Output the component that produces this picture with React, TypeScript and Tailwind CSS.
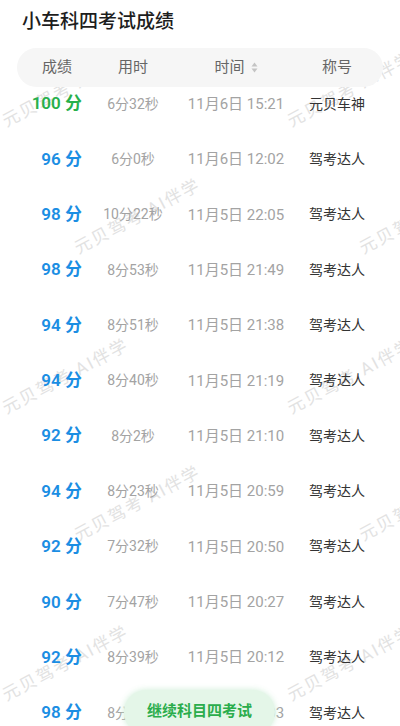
import React from "react";

const rows = [
  { s: "100 分", d: "6分32秒", t: "11月6日 15:21", n: "元贝车神", g: true },
  { s: "96 分", d: "6分0秒", t: "11月6日 12:02", n: "驾考达人" },
  { s: "98 分", d: "10分22秒", t: "11月5日 22:05", n: "驾考达人" },
  { s: "98 分", d: "8分53秒", t: "11月5日 21:49", n: "驾考达人" },
  { s: "94 分", d: "8分51秒", t: "11月5日 21:38", n: "驾考达人" },
  { s: "94 分", d: "8分40秒", t: "11月5日 21:19", n: "驾考达人" },
  { s: "92 分", d: "8分2秒", t: "11月5日 21:10", n: "驾考达人" },
  { s: "94 分", d: "8分23秒", t: "11月5日 20:59", n: "驾考达人" },
  { s: "92 分", d: "7分32秒", t: "11月5日 20:50", n: "驾考达人" },
  { s: "90 分", d: "7分47秒", t: "11月5日 20:27", n: "驾考达人" },
  { s: "92 分", d: "8分39秒", t: "11月5日 20:12", n: "驾考达人" },
  { s: "98 分", d: "8分15秒", t: "11月5日 20:03", n: "驾考达人" },
];

const WM = "元贝驾考 AI伴学";
const wmCls =
  "whitespace-nowrap text-[17px] leading-[17px] h-[17px] tracking-[2px] text-[#e2e2e2] origin-bottom-left -rotate-[28deg]";

function WatermarkTile() {
  return (
    <div className="w-[285px] h-[287px] flex flex-col items-start">
      <span className={wmCls}>{WM}</span>
      <span className={`${wmCls} ml-[72px] mt-[110px]`}>{WM}</span>
    </div>
  );
}

export default function App() {
  return (
    <div
      className="relative w-[400px] h-[726px] overflow-hidden bg-white"
      style={{ fontFamily: 'Roboto, "Noto Sans CJK SC", sans-serif' }}
    >
      <div className="absolute left-[8px] top-[113px] grid grid-cols-[285px_285px] pointer-events-none">
        <WatermarkTile />
        <WatermarkTile />
        <WatermarkTile />
        <WatermarkTile />
        <WatermarkTile />
        <WatermarkTile />
      </div>

      <div className="relative">
        <div className="pl-[22px] pt-[9px] h-[35px] text-[19px] leading-[26px] font-medium text-[#1d1d1d]">
          小车科四考试成绩
        </div>
        <div className="relative z-10 mx-[17px] mt-[13px] h-[39px] rounded-full bg-[#f6f6f6] grid grid-cols-[80px_72px_134px_68px] items-center text-[15px] text-[#666666]">
          <div className="text-center">成绩</div>
          <div className="text-center">用时</div>
          <div className="flex items-center justify-center gap-[6px]">
            <span>时间</span>
            <svg width="7" height="11" viewBox="0 0 7 11">
              <path d="M3.5 0.5 L6.5 4.5 L0.5 4.5 Z" fill="#c4c4c4" />
              <path d="M3.5 10.5 L6.5 6.5 L0.5 6.5 Z" fill="#c4c4c4" />
            </svg>
          </div>
          <div className="text-center">称号</div>
        </div>

        <div className="-mt-[10.6px] px-[17px]">
          {rows.map((r, i) => (
            <div
              key={i}
              className="h-[55.36px] grid grid-cols-[80px_72px_134px_68px] items-center"
            >
              <div
                className={`text-right pr-[15px] text-[17px] font-semibold ${
                  r.g ? "text-[#27b04b]" : "text-[#1b8ee3]"
                }`}
              >
                {r.s}
              </div>
              <div className="text-center text-[14px] text-[#a3a3a3]">{r.d}</div>
              <div className="text-center text-[15px] text-[#a3a3a3]">{r.t}</div>
              <div className="text-center text-[14px] text-[#333333]">{r.n}</div>
            </div>
          ))}
        </div>
      </div>

      <div className="absolute left-[124px] top-[690px] w-[151px] h-[44px] rounded-full bg-[#e4f6e8] shadow-[0_0_6px_rgba(200,235,210,0.9)] flex items-center justify-center pb-[2px] text-[15px] font-bold text-[#2bad4c]">
        继续科目四考试
      </div>
    </div>
  );
}
